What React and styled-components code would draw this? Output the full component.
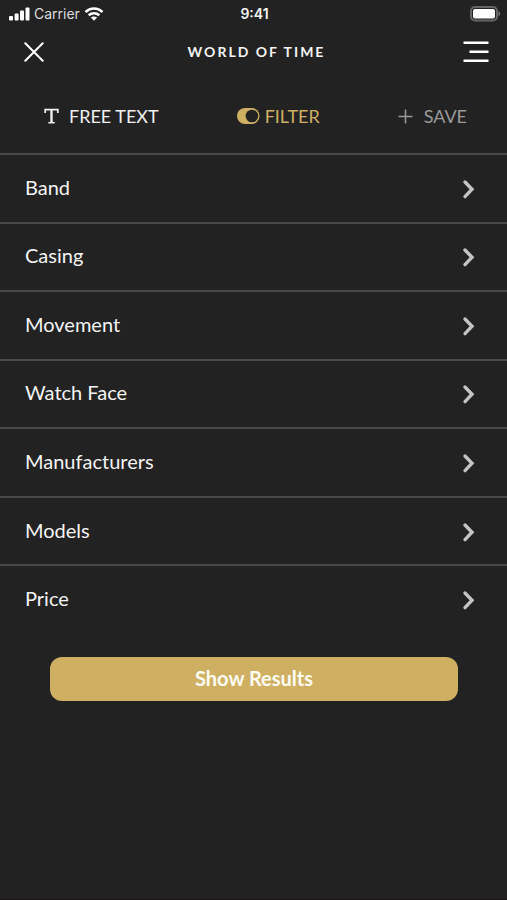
import React from "react";
import styled, { createGlobalStyle } from "styled-components";

const GlobalStyle = createGlobalStyle`
  *, *::before, *::after { box-sizing: border-box; }
  body {
    margin: 0;
    background: #222222;
    color: #f4f4f4;
    font-family: Lato, "Open Sans", sans-serif;
  }
  button { margin: 0; padding: 0; border: 0; background: none; color: inherit; font: inherit; cursor: pointer; }
  svg { display: block; flex: none; }
`;

const Screen = styled.div`
  display: flex;
  flex-direction: column;
  min-height: 100vh;
  border-bottom: 1px solid #1d151a;
`;

const StatusBar = styled.header`
  display: grid;
  grid-template-columns: 1fr auto 1fr;
  align-items: center;
  height: 28px;
  padding: 0 6px 0 8px;
  font-family: Inter, sans-serif;
  font-size: 14px;
  line-height: 20px;
`;

const Carrier = styled.div`
  display: flex;
  align-items: center;
  gap: 4px;
  color: #dcdcdc;
`;

const Clock = styled.time`
  font-weight: 600;
`;

const Battery = styled.div`
  justify-self: end;
`;

const NavBar = styled.nav`
  display: grid;
  grid-template-columns: 1fr auto 1fr;
  align-items: center;
  height: 48px;
  padding: 0 18px 0 24px;
`;

const Title = styled.h1`
  margin: 0;
  font-size: 14px;
  line-height: 20px;
  font-weight: 700;
  letter-spacing: 2px;
`;

const IconButton = styled.button`
  justify-self: ${({ $end }) => ($end ? "end" : "start")};
`;

const Tabs = styled.div`
  display: flex;
  justify-content: space-between;
  align-items: center;
  height: 77px;
  padding: 3px 40px 0 44px;
`;

const Tab = styled.button`
  display: flex;
  align-items: center;
  gap: ${({ $gap }) => $gap}px;
  color: ${({ $color }) => $color};
  font-size: 18px;
  line-height: 24px;
`;

const FilterList = styled.ul`
  display: grid;
  grid-auto-rows: 1fr;
  min-height: 480px;
  margin: 0;
  padding: 0;
  list-style: none;
`;

const FilterItem = styled.li`
  display: flex;
  border-top: 2px solid #494949;
`;

const FilterRow = styled.button`
  display: flex;
  flex: 1;
  align-items: center;
  justify-content: space-between;
  && { padding: 0 32px 3px 25px; }
  font-size: 20px;
  line-height: 28px;
  text-align: left;
`;

const Actions = styled.div`
  display: flex;
  padding: 24px 49px 24px 50px;
`;

const PrimaryButton = styled.button`
  flex: 1;
  height: 44px;
  border-radius: 12px;
  && { background: #cfb063; color: #fffdf4; padding-bottom: 2px; }
  font-size: 20px;
  line-height: 28px;
  font-weight: 700;
`;

const SignalIcon = () => (
  <svg width="22" height="14" viewBox="0 0 22 14" fill="#fff" aria-hidden="true">
    <rect x="1" y="9" width="4" height="4.500" rx="1" />
    <rect x="6.600" y="6.500" width="4" height="7" rx="1" />
    <rect x="12" y="3.500" width="4" height="10" rx="1" />
    <rect x="17.500" y="0.500" width="4" height="13" rx="1" />
  </svg>
);

const WifiIcon = () => (
  <svg width="20" height="14" viewBox="0 0 20 14" fill="none" stroke="#fff" strokeWidth="2.600" aria-hidden="true">
    <path d="M1.500 5C6.200 0.400 13.800 0.400 18.500 5" />
    <path d="M4.700 8.300C7.700 5.500 12.300 5.500 15.300 8.300" />
    <path d="M6.900 10.600C8.700 9.100 11.300 9.100 13.100 10.600L10 13.800Z" fill="#fff" stroke="none" />
  </svg>
);

const BatteryIcon = () => (
  <svg width="31" height="16" viewBox="0 0 31 16" aria-hidden="true">
    <rect x="1" y="1" width="26" height="13.500" rx="4" fill="none" stroke="#666" strokeWidth="2" />
    <rect x="3" y="3" width="22" height="9.500" rx="2" fill="#fff" />
    <path d="M28.500 5.200C30.700 6 30.700 9.400 28.500 10.200Z" fill="#777" />
  </svg>
);

const CloseIcon = () => (
  <svg width="20" height="20" viewBox="0 0 20 20" stroke="#fff" strokeWidth="2" strokeLinecap="round" aria-hidden="true">
    <path d="M1.300 1.300L18.700 18.700M18.700 1.300L1.300 18.700" />
  </svg>
);

const MenuIcon = () => (
  <svg width="26" height="22" viewBox="0 0 26 22" fill="#fff" aria-hidden="true">
    <path d="M0.500 0.500H25.500V3H0.500ZM6.500 9.500H25.500V12H6.500ZM0.500 18.500H25.500V21H0.500Z" />
  </svg>
);

const TypeIcon = () => (
  <svg width="15" height="16" viewBox="0 0 15 16" fill="none" stroke="currentColor" aria-hidden="true">
    <path d="M1.200 5V1.700H13.800V5" strokeWidth="1.700" />
    <path d="M7.500 1.400V14.700" strokeWidth="2.400" />
    <path d="M4.300 14.700H10.700" strokeWidth="1.500" />
  </svg>
);

const ToggleIcon = () => (
  <svg width="23" height="16" viewBox="0 0 23 16" aria-hidden="true">
    <rect width="22.500" height="16" rx="8" fill="currentColor" />
    <circle cx="14.900" cy="8" r="6.300" fill="#222" />
  </svg>
);

const PlusIcon = () => (
  <svg width="15" height="15" viewBox="0 0 15 15" stroke="currentColor" strokeWidth="1.500" aria-hidden="true">
    <path d="M7.500 0.500V14.500M0.500 7.500H14.500" />
  </svg>
);

const ChevronIcon = () => (
  <svg width="13" height="26" viewBox="0 0 13 26" fill="none" stroke="#c4c4c4" strokeWidth="3.400" aria-hidden="true">
    <path d="M3 8L10 15.300L3 22.600" strokeLinecap="round" />
  </svg>
);

const filters = ["Band", "Casing", "Movement", "Watch Face", "Manufacturers", "Models", "Price"];

export default function App() {
  return (
    <>
      <GlobalStyle />
      <Screen>
        <StatusBar>
          <Carrier>
            <SignalIcon />
            <span>Carrier</span>
            <WifiIcon />
          </Carrier>
          <Clock>9:41</Clock>
          <Battery>
            <BatteryIcon />
          </Battery>
        </StatusBar>
        <NavBar>
          <IconButton type="button" aria-label="Close">
            <CloseIcon />
          </IconButton>
          <Title>WORLD OF TIME</Title>
          <IconButton type="button" aria-label="Menu" $end>
            <MenuIcon />
          </IconButton>
        </NavBar>
        <Tabs>
          <Tab type="button" $gap={10} $color="#f0f0f0">
            <TypeIcon />
            FREE TEXT
          </Tab>
          <Tab type="button" $gap={5} $color="#cfb063" aria-pressed="true">
            <ToggleIcon />
            FILTER
          </Tab>
          <Tab type="button" $gap={11} $color="#9a9a9a">
            <PlusIcon />
            SAVE
          </Tab>
        </Tabs>
        <main>
          <FilterList>
            {filters.map((name) => (
              <FilterItem key={name}>
                <FilterRow type="button">
                  {name}
                  <ChevronIcon />
                </FilterRow>
              </FilterItem>
            ))}
          </FilterList>
          <Actions>
            <PrimaryButton type="button">Show Results</PrimaryButton>
          </Actions>
        </main>
      </Screen>
    </>
  );
}
